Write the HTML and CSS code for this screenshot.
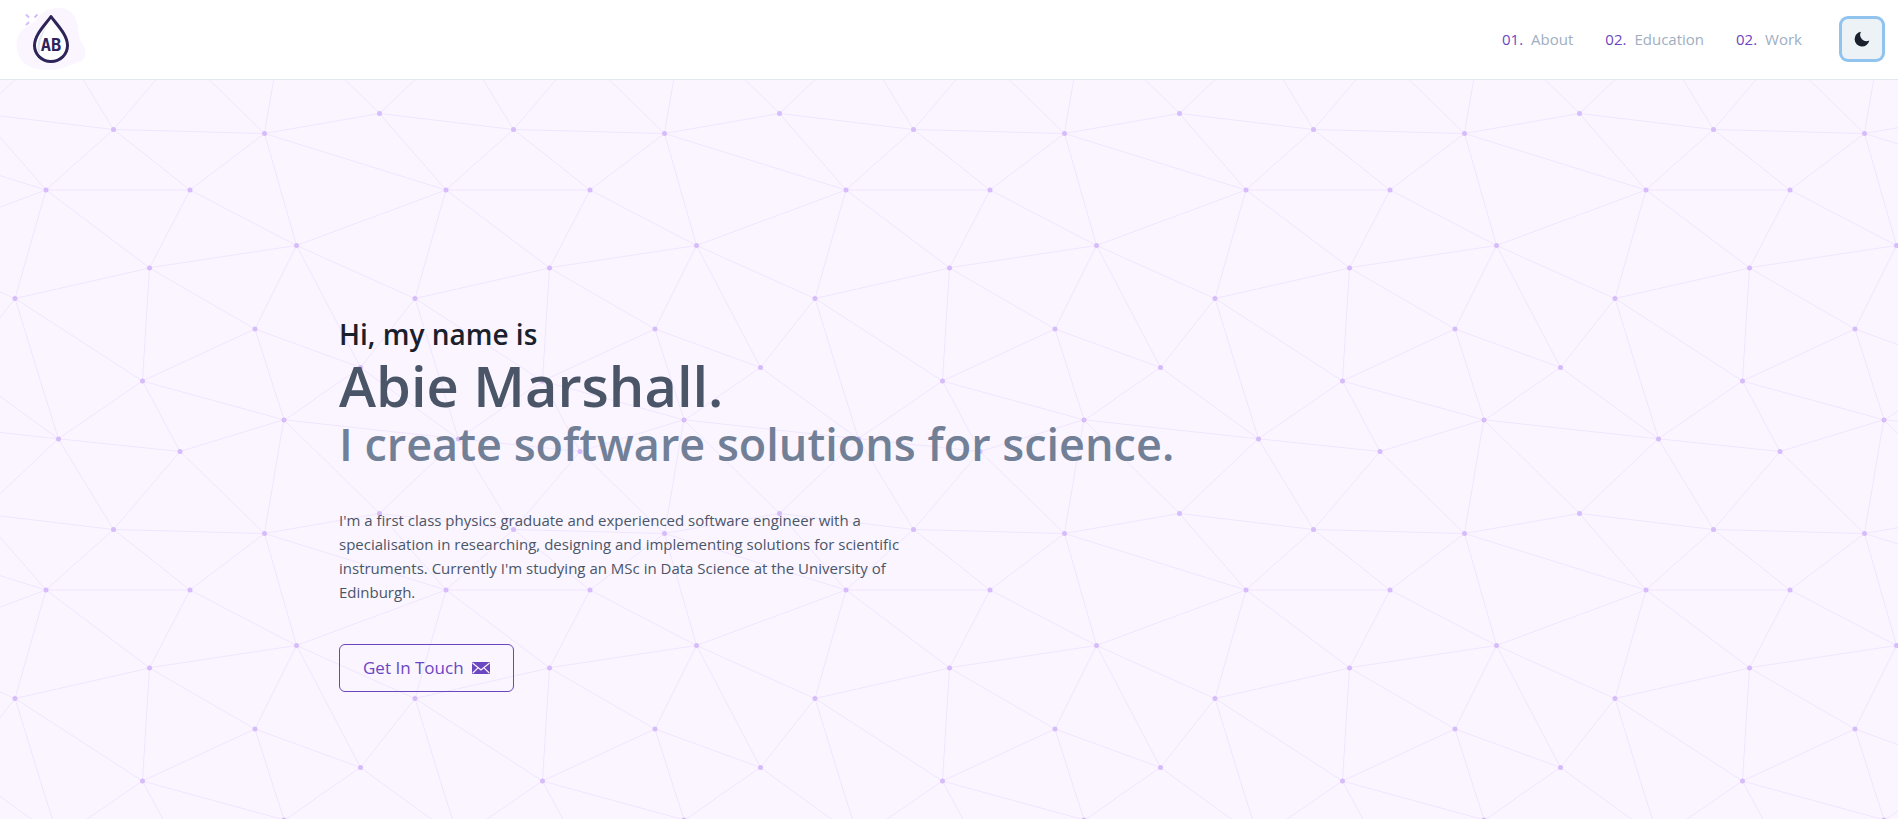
FILE: index.html
```html
<!DOCTYPE html>
<html lang="en">
<head>
<meta charset="utf-8">
<meta name="viewport" content="width=device-width, initial-scale=1">
<title>Abie Marshall</title>
<link rel="stylesheet" href="styles.css">
</head>
<body>
<header class="header">
  <a class="logo" href="#top" aria-label="Home">
    <svg width="70" height="64" viewBox="0 0 70 64" aria-hidden="true">
      <path d="M40 1C50 0 58 5 60.500 14C63 22 61 28 66 36C72 45 71 53 60 56C51 58 47 63 34 63C20 63 9 60 4 51C-1 42 -1 30 6 23C12 18 17 18 21 12C26 5 32 2 40 1Z" fill="#faf5ff"/>
      <path d="M10 7.500L13 10.500M21.500 7.500L18.500 10.500M10 18L13 15" stroke="#d6bcfa" stroke-width="2" fill="none"/>
      <path d="M35 9.500C30 17 18.500 27.500 18.500 38.500A16.500 16 0 0 0 51.500 38.500C51.500 27.500 40 17 35 9.500Z" fill="#fff" stroke="#2e2459" stroke-width="3" stroke-linejoin="round"/>
      <path d="M22.500 46C19 36 25 26 31 19C27 27 22.500 35 24 46Z" fill="#e2e8f0"/>
      <text class="logo-text" x="35" y="44" text-anchor="middle">AB</text>
    </svg>
  </a>
  <nav class="nav" aria-label="Main">
    <a class="nav-link" href="#about"><span class="nav-num">01.</span>About</a>
    <a class="nav-link" href="#education"><span class="nav-num">02.</span>Education</a>
    <a class="nav-link" href="#work"><span class="nav-num">02.</span>Work</a>
    <button class="theme-toggle" type="button" aria-label="Toggle dark mode">
      <svg width="16" height="16" viewBox="0 0 16 16" aria-hidden="true"><path d="M7 .8A7.400 7.400 0 1 0 15.300 9.500A6.300 6.300 0 0 1 7 .8Z" fill="#1a202c"/></svg>
    </button>
  </nav>
</header>
<main class="hero" id="top">
  <div class="container">
    <h1 class="title">
      <span class="greeting">Hi, my name is</span>
      <span class="name">Abie Marshall.</span>
      <span class="tagline">I create software solutions for science.</span>
    </h1>
    <p class="intro">I'm a first class physics graduate and experienced software engineer with a specialisation in researching, designing and implementing solutions for scientific instruments. Currently I'm studying an MSc in Data Science at the University of Edinburgh.</p>
    <a class="cta" href="mailto:">Get In Touch
      <svg width="18" height="12" viewBox="0 0 18 12" aria-hidden="true"><rect width="18" height="12" rx="1" fill="#6b46c1"/><path d="M.5 1L9 8L17.500 1M.8 11L6 5.800M17.200 11L12 5.800" fill="none" stroke="#faf5ff" stroke-width="1.200"/></svg>
    </a>
  </div>
</main>
</body>
</html>
```
FILE: styles.css
```css
* { box-sizing: border-box; }

body {
  margin: 0;
  min-height: 100vh;
  display: flex;
  flex-direction: column;
  font-family: "Open Sans", "Noto Sans", sans-serif;
  font-size: 15px;
  line-height: 24px;
  color: #4a5568;
  background-color: #faf5ff;
  background-image: url("data:image/svg+xml,%3Csvg xmlns='http://www.w3.org/2000/svg' width='400' height='400' viewBox='0 0 800 800'%3E%3Cg fill='none' stroke='%23efe6fe' stroke-width='2'%3E%3Cpath d='M769 229L1037 260.9M927 880L731 737 520 660 309 538 40 599 295 764 126.5 879.5 40 599-197 493 102 382-31 229 126.5 79.5-69-63'/%3E%3Cpath d='M-31 229L237 261 390 382 603 493 308.5 537.5 101.5 381.5M370 905L295 764'/%3E%3Cpath d='M520 660L578 842 731 737 840 599 603 493 520 660 295 764 309 538 390 382 539 269 769 229 577.5 41.5 370 105 295 -36 126.5 79.5 237 261 102 382 40 599 -69 737 127 880'/%3E%3Cpath d='M520-140L578.5 42.5 731-63M603 493L539 269 237 261 370 105M902 382L539 269M390 382L102 382'/%3E%3Cpath d='M-222 42L126.5 79.5 370 105 539 269 577.5 41.5 927 80 769 229 902 382 603 493 731 737M295-36L577.5 41.5M578 842L295 764M40-201L127 80M102 382L-261 269'/%3E%3C/g%3E%3Cg fill='%23d6bcfa'%3E%3Ccircle cx='769' cy='229' r='5'/%3E%3Ccircle cx='539' cy='269' r='5'/%3E%3Ccircle cx='603' cy='493' r='5'/%3E%3Ccircle cx='731' cy='737' r='5'/%3E%3Ccircle cx='520' cy='660' r='5'/%3E%3Ccircle cx='309' cy='538' r='5'/%3E%3Ccircle cx='295' cy='764' r='5'/%3E%3Ccircle cx='40' cy='599' r='5'/%3E%3Ccircle cx='102' cy='382' r='5'/%3E%3Ccircle cx='127' cy='80' r='5'/%3E%3Ccircle cx='370' cy='105' r='5'/%3E%3Ccircle cx='578' cy='42' r='5'/%3E%3Ccircle cx='237' cy='261' r='5'/%3E%3Ccircle cx='390' cy='382' r='5'/%3E%3C/g%3E%3C/svg%3E");
  background-position: -5px -1px;
}

a { text-decoration: none; }

.header {
  display: flex;
  align-items: center;
  justify-content: space-between;
  padding: 7px 16px 8px;
  background: #fff;
  border-bottom: 1px solid #e2e8f0;
}

.logo, .logo svg { display: block; }

.logo-text {
  font-family: "DejaVu Sans Mono", monospace;
  font-weight: 700;
  font-size: 17px;
  fill: #2e2459;
}

.nav {
  display: flex;
  align-items: center;
  gap: 32px;
}

.nav-link {
  display: flex;
  gap: 8px;
  color: #a0aec0;
}

.nav-num { color: #6b46c1; }

.theme-toggle {
  display: grid;
  place-items: center;
  width: 40px;
  height: 40px;
  margin-left: 8px;
  padding: 0;
  border: 0;
  border-radius: 6px;
  background: #edf2f7;
  box-shadow: 0 0 0 3px #90c3ee;
}

.hero {
  flex: 1;
  padding: 234px 32px 64px;
}

.container {
  max-width: 1220px;
  margin: 0 auto;
}

.title {
  display: flex;
  flex-direction: column;
  margin: 0;
  font-weight: 600;
}

.greeting {
  font-size: 28px;
  line-height: 40px;
  color: #1a202c;
}

.name {
  font-size: 56px;
  line-height: 62px;
}

.tagline {
  font-size: 45px;
  line-height: 56px;
  color: #718096;
}

.intro {
  max-width: 576px;
  margin: 36px 0 40px;
}

.cta {
  display: inline-flex;
  align-items: center;
  gap: 8px;
  height: 48px;
  padding: 0 23px;
  border: 1px solid #6b46c1;
  border-radius: 6px;
  font-size: 17px;
  color: #6b46c1;
}
```
